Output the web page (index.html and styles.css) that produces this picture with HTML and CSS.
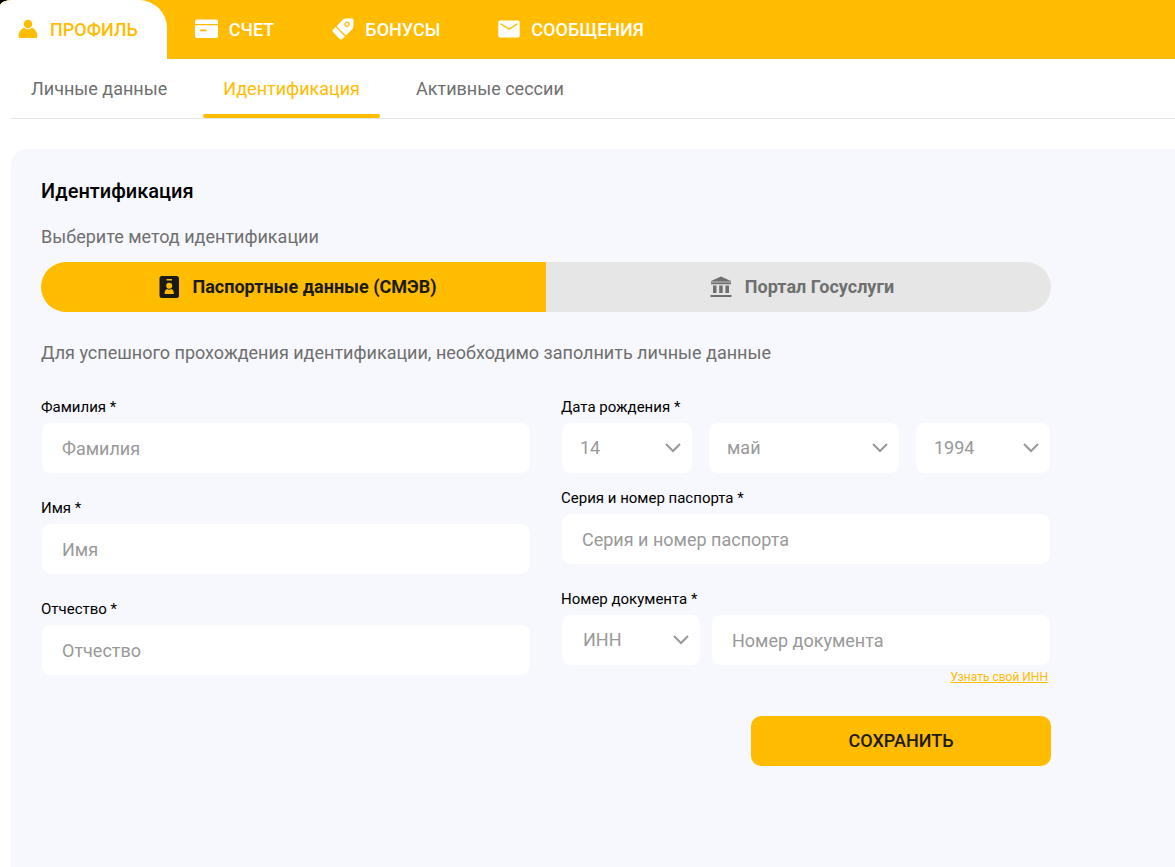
FILE: index.html
```html
<!DOCTYPE html>
<html lang="ru">
<head>
<meta charset="utf-8">
<meta name="viewport" content="width=device-width, initial-scale=1">
<title>Идентификация</title>
<link rel="stylesheet" href="styles.css">
</head>
<body>
<div class="app">
  <nav class="main-nav" aria-label="Разделы">
    <a class="main-tab main-tab--active" href="#">
      <svg class="main-icon" width="20" height="22" viewBox="0 0 20 22" fill="currentColor" aria-hidden="true"><circle cx="10" cy="5" r="4.3"/><path d="M6 8.800C8.500 11 11.500 11 14 8.800C17 10 19.400 13 19.400 17.500Q19.400 19 17.900 19H2.100Q.6 19 .6 17.500C.6 13 3 10 6 8.800Z"/></svg>
      <span>ПРОФИЛЬ</span>
    </a>
    <a class="main-tab" href="#">
      <svg class="main-icon" width="23" height="22" viewBox="0 0 23 22" fill="currentColor" aria-hidden="true"><path d="M2 .5H21Q23 .5 23 2.500V5H0V2.500Q0 .5 2 .5ZM0 6.200H23V17Q23 19 21 19H2Q0 19 0 17ZM5 10.500V12.200H11.500V10.500Z" fill-rule="evenodd"/></svg>
      <span>СЧЕТ</span>
    </a>
    <a class="main-tab" href="#">
      <svg class="main-icon" width="22" height="24" viewBox="0 0 22 24" aria-hidden="true"><path fill="currentColor" d="M12.300 .7L19.300 .3Q21.600 .3 21.600 2.500L21.300 9.200Q21.200 10.100 20.600 10.700L13.900 17.500L4.600 8.200L10.900 1.600Q11.500 .8 12.300 .7Z"/><path fill="currentColor" d="M3.700 9.100L13 18.400L10.600 20.700Q9 22.100 7.500 20.700L1.200 14.300Q-.2 12.800 1.200 11.500Z"/><circle cx="15" cy="6.300" r="2.100" fill="none" stroke="#ffbc00" stroke-width="1.200"/></svg>
      <span>БОНУСЫ</span>
    </a>
    <a class="main-tab" href="#">
      <svg class="main-icon" width="22" height="22" viewBox="0 0 22 22" fill="currentColor" aria-hidden="true"><path d="M2 1.500H20Q21.700 1.500 21.700 3.300V16.700Q21.700 18.500 20 18.500H2Q.3 18.500 .3 16.700V3.300Q.3 1.500 2 1.500ZM2.500 3.900V5.400L11 10.900L19.500 5.400V3.900L11 9.300Z" fill-rule="evenodd"/></svg>
      <span>СООБЩЕНИЯ</span>
    </a>
  </nav>

  <nav class="sub-nav" aria-label="Профиль">
    <a class="sub-tab" href="#">Личные данные</a>
    <a class="sub-tab sub-tab--active" href="#">Идентификация</a>
    <a class="sub-tab" href="#">Активные сессии</a>
  </nav>

  <main class="card">
    <h1 class="title">Идентификация</h1>
    <p class="text text--method">Выберите метод идентификации</p>
    <div class="methods">
      <button class="method method--active" type="button">
        <svg width="24" height="24" viewBox="0 0 24 24" aria-hidden="true"><rect x="2.500" y="1" width="19.500" height="22" rx="2.500" fill="#1a1a17"/><rect x="9.500" y="4" width="5.500" height="1.500" rx=".5" fill="#ffbc00"/><circle cx="12.200" cy="10.800" r="3" fill="#ffbc00"/><path d="M7.600 19Q7.600 15 10 14Q12.200 15.400 14.400 14Q16.900 15 16.900 19Z" fill="#ffbc00"/></svg>
        <span>Паспортные данные (СМЭВ)</span>
      </button>
      <button class="method" type="button">
        <svg width="24" height="24" viewBox="0 0 24 24" aria-hidden="true" fill="currentColor"><path d="M12 1.500L22 6H2Z"/><path opacity=".65" d="M2 6H22V8H2Z"/><path d="M2 8H22V9.300H2ZM4 10.500H7.500V18H4ZM10.200 10.500H13.700V18H10.200ZM16.400 10.500H20V18H16.400ZM1.500 20H22.500V22H1.500Z"/></svg>
        <span>Портал Госуслуги</span>
      </button>
    </div>
    <p class="text text--hint">Для успешного прохождения идентификации, необходимо заполнить личные данные</p>

    <form class="form">
      <div class="column">
        <div class="field">
          <label for="surname">Фамилия *</label>
          <input class="control" id="surname" type="text" placeholder="Фамилия">
        </div>
        <div class="field">
          <label for="name">Имя *</label>
          <input class="control" id="name" type="text" placeholder="Имя">
        </div>
        <div class="field">
          <label for="patronymic">Отчество *</label>
          <input class="control" id="patronymic" type="text" placeholder="Отчество">
        </div>
      </div>
      <div class="column">
        <div class="field field--birth">
          <label for="day">Дата рождения *</label>
          <div class="birth">
            <div class="picker">
              <select class="control" id="day"><option>14</option></select>
              <svg class="chevron" width="16" height="10" viewBox="0 0 16 10" aria-hidden="true"><path d="M1 1L8 8L15 1"/></svg>
            </div>
            <div class="picker">
              <select class="control" aria-label="Месяц"><option>май</option></select>
              <svg class="chevron" width="16" height="10" viewBox="0 0 16 10" aria-hidden="true"><path d="M1 1L8 8L15 1"/></svg>
            </div>
            <div class="picker">
              <select class="control" aria-label="Год"><option>1994</option></select>
              <svg class="chevron" width="16" height="10" viewBox="0 0 16 10" aria-hidden="true"><path d="M1 1L8 8L15 1"/></svg>
            </div>
          </div>
        </div>
        <div class="field">
          <label for="passport">Серия и номер паспорта *</label>
          <input class="control" id="passport" type="text" placeholder="Серия и номер паспорта">
        </div>
        <div class="field field--document">
          <label for="document">Номер документа *</label>
          <div class="document">
            <div class="picker picker--wide">
              <select class="control" aria-label="Тип документа"><option>ИНН</option></select>
              <svg class="chevron" width="16" height="10" viewBox="0 0 16 10" aria-hidden="true"><path d="M1 1L8 8L15 1"/></svg>
            </div>
            <input class="control" id="document" type="text" placeholder="Номер документа">
          </div>
          <a class="inn-link" href="#">Узнать свой ИНН</a>
        </div>
        <button class="save" type="submit">СОХРАНИТЬ</button>
      </div>
    </form>
  </main>
</div>
</body>
</html>
```

FILE: styles.css
```css
:root {
  --accent: #ffbc00;
  --muted: #6f6f6f;
  --placeholder: #999;
  --panel: #f7f8fd;
}

* {
  box-sizing: border-box;
}

html {
  background: #000;
}

body {
  margin: 0;
  font-family: Roboto, "Liberation Sans", sans-serif;
  font-size: 18px;
  line-height: 24px;
  color: #000;
}

button,
input,
select {
  font: inherit;
}

a {
  color: inherit;
  text-decoration: none;
}

.app {
  display: flex;
  flex-direction: column;
  min-height: 100vh;
  overflow: hidden;
  background: #fff;
  border-top-left-radius: 12px 6px;
}

.main-nav {
  display: flex;
  background: var(--accent);
  color: #fff;
  font-weight: 500;
}

.main-tab {
  display: flex;
  align-items: center;
  gap: 11px;
  height: 59px;
  padding: 0 30px 0 28px;
}

.main-tab--active {
  gap: 12px;
  padding: 0 29px 0 18px;
  background: #fff;
  color: var(--accent);
  border-top-right-radius: 28px;
}

.main-icon {
  flex: none;
}

.sub-nav {
  display: flex;
  gap: 16px;
  height: 60px;
  margin-left: 11px;
  border-bottom: 1px solid #e5e5e5;
  color: var(--muted);
}

.sub-tab {
  display: flex;
  align-items: center;
  padding: 4px 20px 0;
  border-bottom: 4px solid transparent;
}

.sub-tab--active {
  position: relative;
  color: var(--accent);
}

.sub-tab--active::after {
  content: "";
  position: absolute;
  right: 0;
  bottom: -4px;
  left: 0;
  height: 4px;
  background: var(--accent);
  border-radius: 2px;
}

.card {
  flex: 1;
  margin: 30px 0 0 11px;
  padding: 30px;
  background: var(--panel);
  border-top-left-radius: 16px;
}

.title {
  margin: 0 0 22px;
  font-size: 20px;
  font-weight: 500;
}

.text {
  margin: 0;
  color: var(--muted);
}

.text--method {
  margin-bottom: 13px;
}

.text--hint {
  margin: 29px 0 32px;
}

.methods {
  display: grid;
  grid-template-columns: 1fr 1fr;
  max-width: 1010px;
  overflow: hidden;
  border-radius: 25px;
}

.method {
  display: flex;
  align-items: center;
  justify-content: center;
  gap: 12px;
  height: 50px;
  padding: 0 0 0 6px;
  border: 0;
  background: #e6e6e6;
  color: var(--muted);
  font-weight: 700;
}

.method--active {
  background: var(--accent);
  color: #1a1a17;
}

.form {
  display: grid;
  grid-template-columns: 1fr 1fr;
  gap: 30px;
  max-width: 1010px;
}

.column,
.field {
  display: flex;
  flex-direction: column;
}

.field {
  gap: 4px;
  margin-bottom: 24px;
}

.field--birth {
  margin-bottom: 14px;
}

.field label {
  font-size: 15px;
  line-height: 21px;
}

.control {
  width: 100%;
  min-width: 0;
  height: 52px;
  padding: 0 20px;
  border: 1px solid var(--panel);
  border-radius: 10px;
  background: #fff;
  color: var(--placeholder);
}

.control::placeholder {
  color: var(--placeholder);
  opacity: 1;
}

.birth {
  display: grid;
  grid-template-columns: 132fr 192fr 136fr;
  gap: 15px;
}

.document {
  display: grid;
  grid-template-columns: 140px 1fr;
  gap: 10px;
}

.picker {
  position: relative;
}

.picker .control {
  appearance: none;
  padding-left: 18px;
}

.picker--wide .control {
  padding-left: 21px;
}

.chevron {
  position: absolute;
  top: 21px;
  right: 12px;
  fill: none;
  stroke: var(--placeholder);
  stroke-width: 2;
  pointer-events: none;
}

.field--document {
  margin-bottom: 32px;
}

.inn-link {
  align-self: flex-end;
  margin-right: 3px;
  color: var(--accent);
  font-size: 12px;
  line-height: 14px;
  text-decoration: underline;
}

.save {
  align-self: flex-end;
  width: 300px;
  max-width: 100%;
  height: 50px;
  border: 0;
  border-radius: 10px;
  background: var(--accent);
  color: #1a1a17;
  font-weight: 500;
}
```
